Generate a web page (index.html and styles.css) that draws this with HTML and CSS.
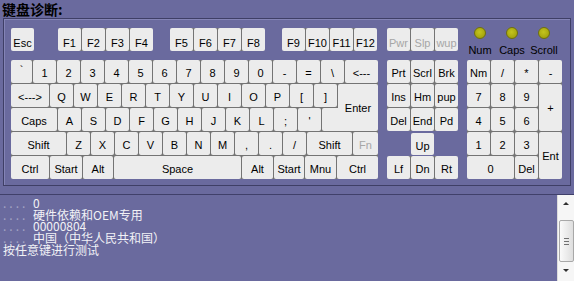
FILE: index.html
```html
<!DOCTYPE html>
<html lang="zh-CN">

<head>
    <meta charset="UTF-8">
    <title>键盘诊断</title>
    <link rel="stylesheet" href="styles.css">
</head>

<body>

    <div class="title">键盘诊断:</div>

    <div class="frame">
        <!-- main keys -->
        <div class="col main-col">
            <div class="top">
                <div class="grp row"><div class="key fn">Esc</div></div>
                <div class="grp row f1"><div class="key fn">F1</div><div class="key fn">F2</div><div class="key fn">F3</div><div class="key fn">F4</div></div>
                <div class="grp row f5"><div class="key fn">F5</div><div class="key fn">F6</div><div class="key fn">F7</div><div class="key fn">F8</div></div>
                <div class="grp row f9"><div class="key fn">F9</div><div class="key fn">F10</div><div class="key fn">F11</div><div class="key fn">F12</div></div>
            </div>
            <div class="grp main">
                <div class="row">
                    <div class="key k-tick">`</div>
                    <div class="key">1</div><div class="key">2</div><div class="key">3</div><div class="key">4</div>
                    <div class="key">5</div><div class="key">6</div><div class="key">7</div><div class="key">8</div>
                    <div class="key">9</div><div class="key">0</div><div class="key">-</div><div class="key">=</div>
                    <div class="key">\</div>
                    <div class="key k-fill">&lt;---</div>
                </div>
                <div class="pair">
                    <div class="pair-left">
                        <div class="row">
                            <div class="key k-tab">&lt;---&gt;</div>
                            <div class="key">Q</div><div class="key">W</div><div class="key">E</div><div class="key">R</div>
                            <div class="key">T</div><div class="key">Y</div><div class="key">U</div><div class="key">I</div>
                            <div class="key">O</div><div class="key">P</div><div class="key">[</div><div class="key">]</div>
                        </div>
                        <div class="row">
                            <div class="key k-caps">Caps</div>
                            <div class="key">A</div><div class="key">S</div><div class="key">D</div><div class="key">F</div>
                            <div class="key">G</div><div class="key">H</div><div class="key">J</div><div class="key">K</div>
                            <div class="key">L</div><div class="key">;</div><div class="key">'</div>
                            <div class="key k-enter-foot"></div>
                        </div>
                    </div>
                    <div class="key k-enter">Enter</div>
                </div>
                <div class="row">
                    <div class="key k-lshift">Shift</div>
                    <div class="key">Z</div><div class="key">X</div><div class="key">C</div><div class="key">V</div>
                    <div class="key">B</div><div class="key">N</div><div class="key">M</div><div class="key">,</div>
                    <div class="key">.</div><div class="key">/</div>
                    <div class="key k-rshift">Shift</div>
                    <div class="key k-fill off">Fn</div>
                </div>
                <div class="row">
                    <div class="key k-ctrl">Ctrl</div>
                    <div class="key k-start">Start</div>
                    <div class="key k-alt">Alt</div>
                    <div class="key k-space">Space</div>
                    <div class="key k-ralt">Alt</div>
                    <div class="key k-rstart">Start</div>
                    <div class="key k-menu">Mnu</div>
                    <div class="key k-fill">Ctrl</div>
                </div>
            </div>
        </div>

        <!-- navigation keys -->
        <div class="col nav-col">
            <div class="top">
                <div class="grp row"><div class="key fn off">Pwr</div><div class="key fn off">Slp</div><div class="key fn off">wup</div></div>
            </div>
            <div class="grp nav-block">
                <div class="key">Prt</div><div class="key">Scrl</div><div class="key">Brk</div>
                <div class="key">Ins</div><div class="key">Hm</div><div class="key">pup</div>
                <div class="key">Del</div><div class="key">End</div><div class="key">Pd</div>
            </div>
            <div class="grp row nav-up"><div class="key">Up</div></div>
            <div class="grp row nav-arrows"><div class="key">Lf</div><div class="key">Dn</div><div class="key">Rt</div></div>
        </div>

        <!-- numeric pad -->
        <div class="col pad-col">
            <div class="top leds">
                <div class="led-item"><div class="led"></div><div class="led-label">Num</div></div>
                <div class="led-item"><div class="led"></div><div class="led-label">Caps</div></div>
                <div class="led-item"><div class="led"></div><div class="led-label">Scroll</div></div>
            </div>
            <div class="grp pad">
                <div class="key">Nm</div><div class="key">/</div><div class="key">*</div><div class="key">-</div>
                <div class="key">7</div><div class="key">8</div><div class="key">9</div><div class="key tall">+</div>
                <div class="key">4</div><div class="key">5</div><div class="key">6</div>
                <div class="key">1</div><div class="key">2</div><div class="key">3</div><div class="key tall">Ent</div>
                <div class="key wide">0</div><div class="key">Del</div>
            </div>
        </div>
    </div>

    <div class="log">
        <div class="lines">
            <div class="line"><span class="dots">....</span>0</div>
            <div class="line"><span class="dots">....</span>硬件依赖和OEM专用</div>
            <div class="line"><span class="dots">....</span>00000804</div>
            <div class="line"><span class="dots">....</span>中国（中华人民共和国）</div>
            <div class="line">按任意键进行测试</div>
        </div>
        <div class="scroll">
            <div class="arrow"><span class="tri-up"></span></div>
            <div class="thumb"><span></span><span></span><span></span></div>
            <div class="arrow"><span class="tri-down"></span></div>
        </div>
    </div>

</body>

</html>
```

FILE: styles.css
```css
* {
    box-sizing: border-box;
}

body {
    margin: 0;
    width: 574px;
    height: 281px;
    overflow: hidden;
    background: #6a6a9e;
    font-family: "Liberation Sans", Arial, sans-serif;
    font-size: 11px;
    color: #000;
}

.title {
    height: 18px;
    padding-left: 2px;
    font: bold 14px/18px "Noto Sans CJK SC", sans-serif;
}

.frame {
    margin: 0 3px;
    height: 168px;
    border: 1px solid #3f3f66;
    box-shadow: inset 1px 1px 0 #8484b6;
    padding: 9px 0 0 7px;
    display: flex;
    gap: 9px;
}

.col {
    display: flex;
    flex-direction: column;
}

.top {
    height: 32px;
    display: flex;
    align-items: flex-start;
}

/* key groups */
.grp {
    background: #747474;
    border-radius: 3px;
}

.row {
    display: flex;
    gap: 1px;
}

.key {
    width: 23px;
    height: 23px;
    flex-shrink: 0;
    background: #ececec;
    border-radius: 2px;
    display: flex;
    align-items: center;
    justify-content: center;
    padding-top: 3px;
    white-space: nowrap;
}

.key.fn {
    padding-top: 6px;
}

.key.off {
    color: #a6a6a6;
}

.f1 { margin-left: 24px; }
.f5 { margin-left: 17px; }
.f9 { margin-left: 17px; }

.main {
    width: 367px;
    display: flex;
    flex-direction: column;
    gap: 1px;
}

.pair {
    display: flex;
    gap: 1px;
}

.pair-left {
    width: 326px;
    display: flex;
    flex-direction: column;
    gap: 1px;
}

.k-tick { width: 21px; align-items: flex-start; padding-top: 4px; }
.k-fill { flex: 1; }
.k-tab { width: 38px; }
.k-caps { width: 46px; }
.k-enter-foot { width: 16px; margin-right: -1px; border-radius: 2px 0 0 2px; }
.k-enter { flex: 1; height: auto; border-radius: 2px 2px 2px 0; padding-top: 0; }
.k-lshift { width: 55px; }
.k-rshift { width: 45px; }
.k-ctrl { width: 38px; }
.k-start { width: 32px; }
.k-alt { width: 30px; }
.k-space { width: 127px; }
.k-ralt { width: 31px; }
.k-rstart { width: 30px; }
.k-menu { width: 31px; }

/* navigation */
.nav-col {
    width: 71px;
}

.nav-block {
    display: grid;
    grid-template-columns: repeat(3, 23px);
    grid-auto-rows: 23px;
    gap: 1px;
}

.nav-up {
    margin: 2px 0 0 24px;
    width: 23px;
}

.nav-up .key {
    height: 22px;
}

.nav-arrows {
    margin-top: 1px;
}

/* numeric pad */
.pad-col {
    width: 95px;
}

.pad {
    display: grid;
    grid-template-columns: repeat(4, 23px);
    grid-template-rows: repeat(5, 23px);
    gap: 1px;
}

.pad .tall {
    grid-row: span 2;
    height: auto;
    padding-top: 0;
}

.pad .wide {
    grid-column: span 2;
    width: auto;
}

.leds {
    margin-left: -3px;
}

.led-item {
    width: 32px;
    display: flex;
    flex-direction: column;
    align-items: center;
}

.led {
    width: 12px;
    height: 12px;
    margin-top: -1px;
    border-radius: 50%;
    border: 1px solid #70700c;
    background: radial-gradient(circle at 45% 40%, #c4c41e, #9a9a06);
}

.led-label {
    margin-top: 4px;
    line-height: 14px;
}

/* output log */
.log {
    margin-top: 8px;
    height: 87px;
    border-top: 1px solid #40406a;
    display: flex;
}

.lines {
    flex: 1;
    padding: 2px 0 0 3px;
    color: #f2f2f6;
    font: 12px/11.7px "Noto Sans CJK SC", sans-serif;
}

.line {
    white-space: nowrap;
}

.dots {
    display: inline-block;
    width: 30px;
    color: #a4a4c4;
    letter-spacing: 3px;
}

.scroll {
    width: 17px;
    background: #f6f6f6;
    border-left: 1px solid #dcdcdc;
    display: flex;
    flex-direction: column;
    align-items: center;
}

.arrow {
    height: 17px;
    width: 100%;
    display: flex;
    align-items: center;
    justify-content: center;
}

.tri-up {
    border-left: 3px solid transparent;
    border-right: 3px solid transparent;
    border-bottom: 3px solid #303030;
}

.tri-down {
    border-left: 3px solid transparent;
    border-right: 3px solid transparent;
    border-top: 3px solid #303030;
}

.thumb {
    margin-top: 8px;
    width: 15px;
    height: 42px;
    border: 1px solid #a8a8a8;
    border-radius: 2px;
    background: linear-gradient(to right, #fafafa, #dedede);
    display: flex;
    flex-direction: column;
    align-items: center;
    justify-content: center;
    gap: 2px;
}

.thumb span {
    width: 5px;
    height: 1px;
    background: #707070;
}
```
